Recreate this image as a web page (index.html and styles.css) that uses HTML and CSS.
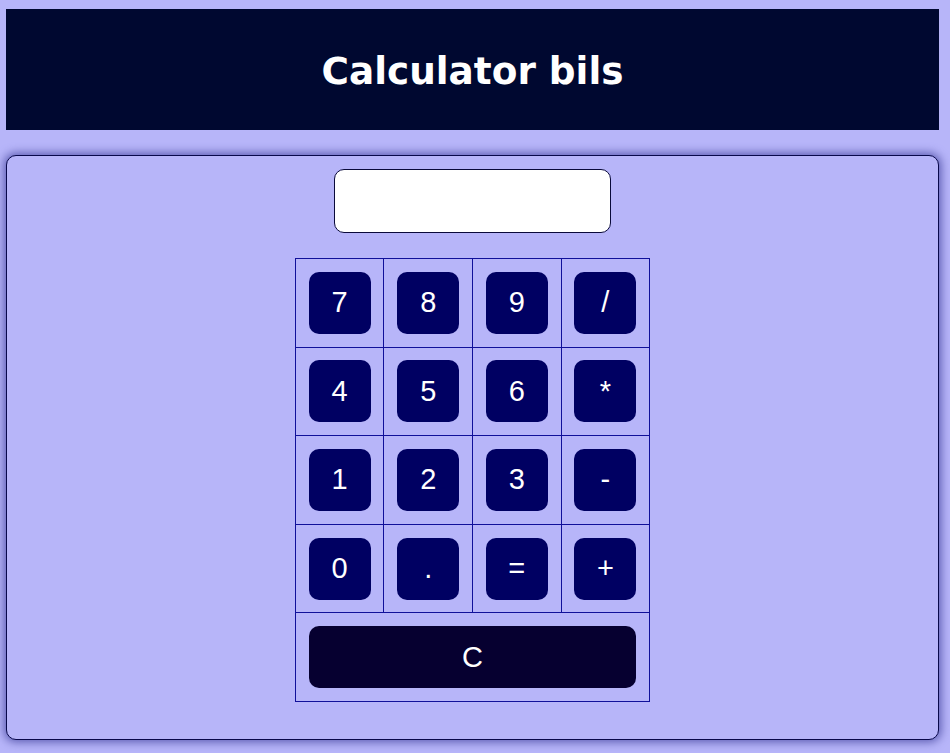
FILE: index.html
```html
<!DOCTYPE html>
<html lang="ro">
<head>
<meta charset="utf-8">
<title>Calculator bils</title>
<link rel="stylesheet" href="styles.css">
</head>
<body>
<div class="page">
  <header class="top">
    <h1 class="title">Calculator bils</h1>
  </header>
  <main class="calc">
    <input class="display" type="text" value="">
    <table class="keys">
      <tr>
        <td><button class="key">7</button></td>
        <td><button class="key">8</button></td>
        <td><button class="key">9</button></td>
        <td><button class="key">/</button></td>
      </tr>
      <tr>
        <td><button class="key">4</button></td>
        <td><button class="key">5</button></td>
        <td><button class="key">6</button></td>
        <td><button class="key">*</button></td>
      </tr>
      <tr>
        <td><button class="key">1</button></td>
        <td><button class="key">2</button></td>
        <td><button class="key">3</button></td>
        <td><button class="key">-</button></td>
      </tr>
      <tr>
        <td><button class="key">0</button></td>
        <td><button class="key">.</button></td>
        <td><button class="key">=</button></td>
        <td><button class="key">+</button></td>
      </tr>
      <tr>
        <td colspan="4"><button class="key clear">C</button></td>
      </tr>
    </table>
  </main>
</div>
</body>
</html>
```

FILE: styles.css
```css
html, body {
  margin: 0;
  padding: 0;
  background: #b7b5f9;
  height: 753px;
  overflow: hidden;
}

.page {
  margin: 9px 11px 0 6px;
  display: flex;
  flex-direction: column;
  gap: 25px;
}

.top {
  background: #000830;
  height: 121px;
  display: flex;
  align-items: center;
  justify-content: center;
}

.title {
  margin: 2px 0 0 0;
  color: #ffffff;
  font-family: "DejaVu Sans", Verdana, sans-serif;
  font-weight: bold;
  font-size: 37.4px;
}

.calc {
  border: 1px solid #08084a;
  border-radius: 10px;
  box-shadow: 0 0 10px 2px #5a5ab0;
  background: #b7b5f9;
  height: 585px;
  display: flex;
  flex-direction: column;
  align-items: center;
  padding-top: 13px;
  box-sizing: border-box;
}

.display {
  width: 277px;
  height: 64px;
  box-sizing: border-box;
  border: 1px solid #0a0a3a;
  border-radius: 10px;
  background: #ffffff;
  margin: 0 0 25px 0;
  font-family: "Liberation Sans", Arial, sans-serif;
  font-size: 28px;
}

.keys {
  border-collapse: collapse;
  border: 1px solid #10109a;
}

.keys td {
  border: 1px solid #10109a;
  padding: 12.8px;
  text-align: center;
}

.key {
  width: 62px;
  height: 62px;
  border: none;
  border-radius: 10px;
  background: #000062;
  color: #ffffff;
  font-family: "Liberation Sans", Arial, sans-serif;
  font-size: 29px;
  padding: 0;
  display: block;
}

.key.clear {
  width: 100%;
  background: #060030;
}
```
